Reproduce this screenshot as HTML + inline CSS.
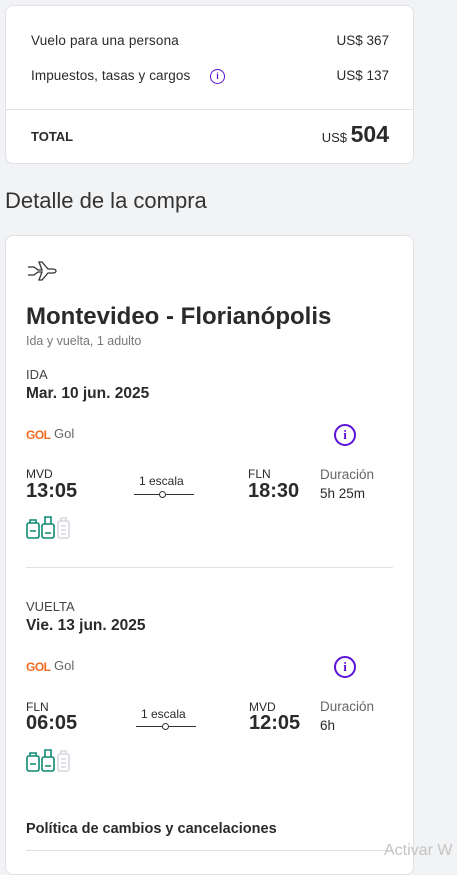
<!DOCTYPE html>
<html><head><meta charset="utf-8"><style>
*{box-sizing:border-box;margin:0;padding:0}
body{width:457px;height:854px;overflow:hidden;background:#f2f3f5;font-family:"Liberation Sans",sans-serif;color:#2a2a2a;position:relative}
.card{position:absolute;left:5px;width:409px;background:#fff;border:1px solid #dfe1e6;border-radius:8px}
.a{position:absolute;white-space:nowrap}
.gol{color:#f26a21;font-weight:bold;font-size:12px;letter-spacing:-0.5px}
.info{position:absolute;width:22px;height:22px;border:2px solid #5b12d6;border-radius:50%;color:#5b12d6;font-weight:bold;font-size:13px;text-align:center;line-height:18px;font-family:"Liberation Serif",serif}
</style></head><body>
<div class="card" style="top:5px;height:159px">
<div class="a" style="left:25px;top:27px;font-size:13.5px;letter-spacing:0.2px">Vuelo para una persona</div>
<div class="a" style="right:24px;top:27px;font-size:13.5px">US$ 367</div>
<div class="a" style="left:25px;top:62px;font-size:13.5px;letter-spacing:0.1px">Impuestos, tasas y cargos</div>
<div class="a" style="left:204px;top:63px;width:15px;height:15px;border:1.5px solid #5b12d6;border-radius:50%;color:#5b12d6;font-size:9px;font-weight:bold;text-align:center;line-height:12px">i</div>
<div class="a" style="right:24px;top:62px;font-size:13.5px">US$ 137</div>
<div class="a" style="left:0;right:0;top:103px;border-top:1px solid #dfe1e6"></div>
<div class="a" style="left:25px;top:123px;font-size:13px;font-weight:bold">TOTAL</div>
<div class="a" style="right:24px;top:115px;font-size:13px"><span>US$ </span><span style="font-size:23px;font-weight:bold">504</span></div>
</div>
<div class="a" style="left:5px;top:188px;font-size:22px;color:#333">Detalle de la compra</div>
<div class="card" style="top:235px;height:640px">
<svg class="a" style="left:20px;top:24px" width="32" height="22" viewBox="0 0 32 22" fill="none" stroke="#333" stroke-width="1.3"><path d="M2 7h6l4 3h4l-3-8h3l6 7h5c2 0 3 1 3 2s-1 2-3 2h-5l-6 7h-3l3-8h-4l-4 3H2"/></svg>
<div class="a" style="left:20px;top:67px;font-size:24px;font-weight:bold;color:#2a2a2a">Montevideo - Florianópolis</div>
<div class="a" style="left:20px;top:98px;font-size:12.5px;color:#777">Ida y vuelta, 1 adulto</div>

<div class="a" style="left:20px;top:131px;font-size:13px;color:#444">IDA</div>
<div class="a" style="left:20px;top:149px;font-size:15.5px;font-weight:bold">Mar. 10 jun. 2025</div>
<div class="a gol" style="left:20px;top:192px">GOL</div>
<div class="a" style="left:48px;top:190px;font-size:13px;color:#666">Gol</div>
<div class="info" style="left:328px;top:188px">i</div>
<div class="a" style="left:20px;top:231px;font-size:12px">MVD</div>
<div class="a" style="left:20px;top:244px;font-size:20px;font-weight:bold">13:05</div>
<div class="a" style="left:133px;top:238px;font-size:12px">1 escala</div>
<div class="a" style="left:128px;top:258px;width:60px;border-top:1px solid #333"></div>
<div class="a" style="left:153px;top:255px;width:7px;height:7px;border:1px solid #333;border-radius:50%;background:#fff"></div>
<div class="a" style="left:242px;top:231px;font-size:12px">FLN</div>
<div class="a" style="left:242px;top:244px;font-size:20px;font-weight:bold">18:30</div>
<div class="a" style="left:314px;top:231px;font-size:13.5px;color:#666">Duración</div>
<div class="a" style="left:314px;top:250px;font-size:13.5px">5h 25m</div>
<svg class="a" style="left:20px;top:280px" width="50" height="24" viewBox="0 0 50 24" fill="none" stroke-width="1.6"><g stroke="#0d8a72"><rect x="1" y="7" width="12" height="15" rx="2"/><path d="M4 7V4h6v3M4 15h6"/><rect x="16" y="8" width="12" height="14" rx="2"/><path d="M19 8V1h6v7M19 17h6"/></g><g stroke="#d5d8de"><rect x="32" y="5" width="11" height="17" rx="2"/><path d="M35 5V2h5v3M35 10h5M35 14h5M35 18h5"/></g></svg>
<div class="a" style="left:20px;right:20px;top:331px;border-top:1px solid #dfe1e6"></div>

<div class="a" style="left:20px;top:363px;font-size:13px;color:#444">VUELTA</div>
<div class="a" style="left:20px;top:381px;font-size:15.5px;font-weight:bold">Vie. 13 jun. 2025</div>
<div class="a gol" style="left:20px;top:424px">GOL</div>
<div class="a" style="left:48px;top:422px;font-size:13px;color:#666">Gol</div>
<div class="info" style="left:328px;top:420px">i</div>
<div class="a" style="left:20px;top:464px;font-size:12px">FLN</div>
<div class="a" style="left:20px;top:476px;font-size:20px;font-weight:bold">06:05</div>
<div class="a" style="left:135px;top:471px;font-size:12px">1 escala</div>
<div class="a" style="left:130px;top:490px;width:60px;border-top:1px solid #333"></div>
<div class="a" style="left:156px;top:487px;width:7px;height:7px;border:1px solid #333;border-radius:50%;background:#fff"></div>
<div class="a" style="left:243px;top:464px;font-size:12px">MVD</div>
<div class="a" style="left:243px;top:476px;font-size:20px;font-weight:bold">12:05</div>
<div class="a" style="left:314px;top:463px;font-size:13.5px;color:#666">Duración</div>
<div class="a" style="left:314px;top:482px;font-size:13.5px">6h</div>
<svg class="a" style="left:20px;top:513px" width="50" height="24" viewBox="0 0 50 24" fill="none" stroke-width="1.6"><g stroke="#0d8a72"><rect x="1" y="7" width="12" height="15" rx="2"/><path d="M4 7V4h6v3M4 15h6"/><rect x="16" y="8" width="12" height="14" rx="2"/><path d="M19 8V1h6v7M19 17h6"/></g><g stroke="#d5d8de"><rect x="32" y="5" width="11" height="17" rx="2"/><path d="M35 5V2h5v3M35 10h5M35 14h5M35 18h5"/></g></svg>
<div class="a" style="left:20px;top:585px;font-size:14.5px;font-weight:bold">Política de cambios y cancelaciones</div>
<div class="a" style="left:20px;right:20px;top:614px;border-top:1px solid #dfe1e6"></div>
</div>
<div class="a" style="left:384px;top:842px;font-size:16px;color:#c4c4c4">Activar W</div>
</body></html>
